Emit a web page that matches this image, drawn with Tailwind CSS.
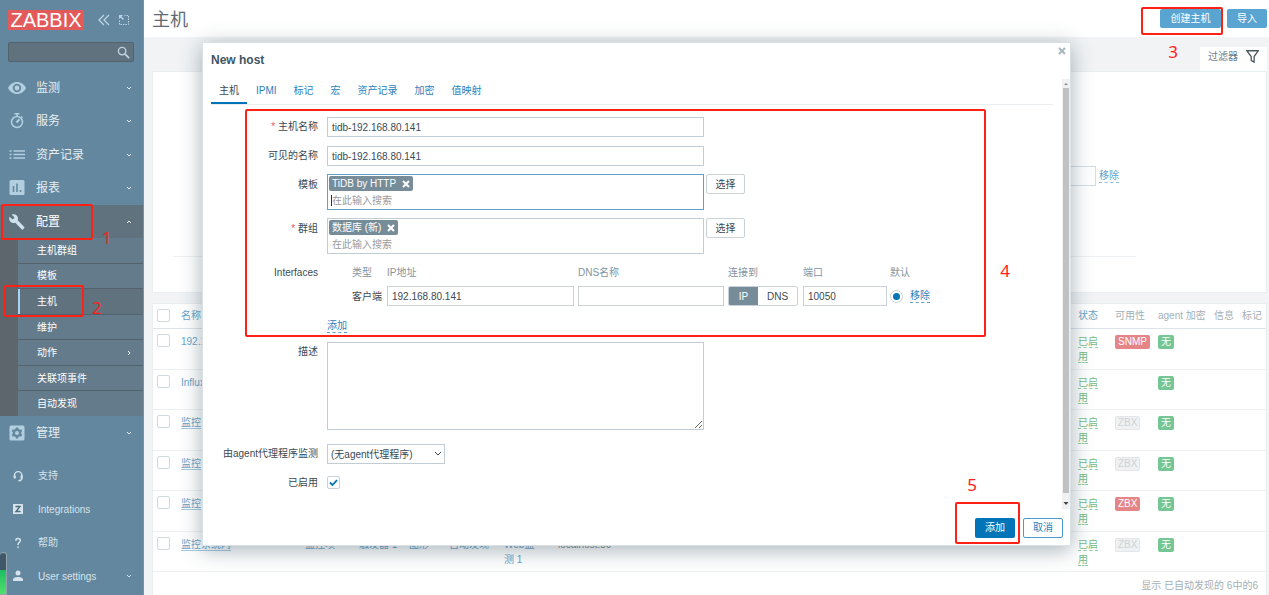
<!DOCTYPE html>
<html lang="zh-CN">
<head>
<meta charset="utf-8">
<meta name="viewport" content="width=device-width, initial-scale=1">
<title>主机</title>
<script src="https://cdn.jsdelivr.net/npm/@tailwindcss/browser@4"></script>
</head>
<body class="relative flex h-screen overflow-hidden bg-[#f1f3f5] font-['Liberation_Sans','Noto_Sans_CJK_SC',sans-serif] text-[10px] leading-[15px] text-[#3c4a54]">

<svg class="hidden">
  <symbol id="down" viewBox="0 0 6 6"><path d="M1 2l2 2 2-2" fill="none" stroke="currentColor"/></symbol>
  <symbol id="x" viewBox="0 0 8 8"><path d="M1 1l6 6M7 1L1 7" fill="none" stroke="currentColor" stroke-width="2"/></symbol>
</svg>

<!-- Sidebar -->
<aside class="relative flex w-36 shrink-0 flex-col overflow-hidden border-r border-[#7295a9] bg-[#62879e] text-[#e6eef3]">
  <div class="flex h-10 shrink-0 items-center pl-2">
    <a href="#" class="flex h-5 w-[76px] items-center justify-center bg-[#e35a5b] text-[20px] leading-5 text-white">ZABBIX</a>
    <button aria-label="折叠" class="ml-[14px] text-[#bcd3e1]"><svg class="h-3 w-3" viewBox="0 0 12 12" fill="none" stroke="currentColor" stroke-width="1.300"><path d="M6 1L1 6l5 5M11 1L6 6l5 5"/></svg></button>
    <button aria-label="隐藏" class="ml-2 text-[#bcd3e1]"><svg class="h-3 w-3" viewBox="0 0 12 12" fill="none" stroke="currentColor"><path d="M1.500 6.500v4h9v-9h-4" stroke-dasharray="1.500 1"/><path d="M5.500 5.500L2 2" stroke-width="1.500"/><path d="M1 1h4L1 5z" fill="currentColor" stroke="none"/></svg></button>
  </div>
  <div class="mt-[2px] ml-2 flex h-5 w-[126px] shrink-0 items-center rounded-xs border border-[#54626d] bg-[#61727f] pr-[3px]">
    <input aria-label="搜索" class="min-w-0 flex-1 bg-transparent px-1 outline-none">
    <svg class="h-[13px] w-[13px] text-[#bcd3e1]" viewBox="0 0 14 14" fill="none" stroke="currentColor" stroke-width="1.500"><circle cx="5.500" cy="5.500" r="4"/><path d="M8.500 8.500L13 13" stroke-width="2"/></svg>
  </div>

  <nav class="mt-[9px] shrink-0">
    <div class="flex h-[134px] flex-col text-xs">
      <a href="#" class="flex flex-1 items-center pr-[11px] pl-2"><svg class="h-[18px] w-[18px] text-[#b3cfdf]" viewBox="0 0 18 18" fill="currentColor"><path fill-rule="evenodd" d="M9 3C5 3 1.700 5.500 0 9c1.700 3.500 5 6 9 6s7.300-2.500 9-6c-1.700-3.500-5-6-9-6zm0 10.200a4.200 4.200 0 110-8.400 4.200 4.200 0 010 8.400z"/><circle cx="9" cy="9" r="2.400"/></svg><span class="ml-[10px] flex-1">监测</span><svg class="h-[6px] w-[6px]"><use href="#down"/></svg></a>
      <a href="#" class="flex flex-1 items-center pr-[11px] pl-2"><svg class="h-[18px] w-[18px] text-[#b3cfdf]" viewBox="0 0 18 18" fill="none" stroke="currentColor" stroke-width="1.500"><circle cx="9" cy="10" r="5.500"/><path d="M6.500 1.700h5M9 1.500v3M13 4.500l1.500 1.200"/><path d="M11.500 7.300L8.500 10.500" stroke-width="2"/></svg><span class="ml-[10px] flex-1">服务</span><svg class="h-[6px] w-[6px]"><use href="#down"/></svg></a>
      <a href="#" class="flex flex-1 items-center pr-[11px] pl-2"><svg class="h-[18px] w-[18px] text-[#b3cfdf]" viewBox="0 0 18 18" fill="none" stroke="currentColor" stroke-width="1.500"><path d="M1.500 5h2M1.500 8.500h2M1.500 12h2M5.500 5H17M5.500 8.500H17M5.500 12H17"/></svg><span class="ml-[10px] flex-1">资产记录</span><svg class="h-[6px] w-[6px]"><use href="#down"/></svg></a>
      <a href="#" class="flex flex-1 items-center pr-[11px] pl-2"><svg class="h-[18px] w-[18px]" viewBox="0 0 18 18"><rect x="1.500" y="1" width="15" height="15" rx="1.500" fill="#b3cfdf"/><path d="M5.500 7v6M9 4.500V13M12.500 11v2" stroke="#62879e" stroke-width="1.600"/></svg><span class="ml-[10px] flex-1">报表</span><svg class="h-[6px] w-[6px]"><use href="#down"/></svg></a>
    </div>
    <a href="#" class="flex h-[33px] items-center bg-[#61727f] pr-[11px] pl-2 text-xs text-white"><svg class="h-[18px] w-[18px] text-[#cfe1ec]" viewBox="0 0 18 18"><path d="M16.300 13.900L9.700 7.300c.6-1.600.3-3.500-1-4.800C7.400 1.200 5.300.9 3.700 1.700l2.900 2.900-2 2L1.600 3.700C.8 5.300 1.100 7.400 2.500 8.800c1.300 1.300 3.200 1.600 4.800 1l6.600 6.600c.3.300.7.300 1 0l1.400-1.500c.3-.2.3-.7 0-1z" fill="currentColor"/></svg><span class="ml-[10px] flex-1">配置</span><svg class="h-[6px] w-[6px] rotate-180"><use href="#down"/></svg></a>
    <div class="flex h-[178px] flex-col divide-y divide-[#53626d] border-l-18 border-[#5d666c] bg-[#637b8a] text-white">
      <a href="#" class="flex flex-1 items-center pl-[19px]">主机群组</a>
      <a href="#" class="flex flex-1 items-center pl-[19px]">模板</a>
      <a href="#" class="flex flex-1 items-center bg-[#61727f]"><span class="h-full w-[2px] bg-[#a8d4f2]"></span><span class="pl-[17px]">主机</span></a>
      <a href="#" class="flex flex-1 items-center pl-[19px]">维护</a>
      <a href="#" class="flex flex-1 items-center pr-[11px] pl-[19px]"><span class="flex-1">动作</span><svg class="h-[6px] w-[6px] -rotate-90"><use href="#down"/></svg></a>
      <a href="#" class="flex flex-1 items-center pl-[19px]">关联项事件</a>
      <a href="#" class="flex flex-1 items-center pl-[19px]">自动发现</a>
    </div>
    <a href="#" class="flex h-[33px] items-center pr-[11px] pl-2 text-xs"><svg class="h-[18px] w-[18px]" viewBox="0 0 18 18"><rect x="1.500" y="1.500" width="15" height="15" rx="1.500" fill="#b3cfdf"/><g stroke="#62879e" fill="none"><circle cx="9" cy="9" r="3.200" stroke-width="2.400"/><path d="M9 3.500v2M9 12.500v2M4.200 6.200l1.800 1M12 10.800l1.800 1M4.200 11.800l1.800-1M12 7.200l1.800-1" stroke-width="2.400"/></g></svg><span class="ml-[10px] flex-1">管理</span><svg class="h-[6px] w-[6px]"><use href="#down"/></svg></a>
  </nav>

  <div class="mt-[10px] flex h-[134px] shrink-0 flex-col text-[#d6e3eb]">
    <a href="#" class="flex flex-1 items-center pl-3"><svg class="h-3 w-3" viewBox="0 0 12 12" fill="none" stroke="currentColor" stroke-width="1.400"><path d="M2.500 8V5.300a3.700 3.700 0 017.400 0V8c0 1.800-1.500 2.700-3.400 2.700"/><path d="M2.700 5.500v3M9.600 5.500v3" stroke-width="2"/></svg><span class="ml-[14px]">支持</span></a>
    <a href="#" class="flex flex-1 items-center pl-3"><svg class="h-3 w-3" viewBox="0 0 12 12"><rect x="1" y="1" width="10" height="10" fill="currentColor"/><path d="M3.500 3.500h4.500l-4 5h4.500" fill="none" stroke="#4c6c80" stroke-width="1.400"/></svg><span class="ml-[14px]">Integrations</span></a>
    <a href="#" class="flex flex-1 items-center pl-3"><svg class="h-3 w-3" viewBox="0 0 12 12" fill="none" stroke="currentColor" stroke-width="1.500"><path d="M3.800 3.800C3.800 2.200 4.800 1.500 6 1.500s2.300.8 2.300 2.100C8.300 5.300 6 5.400 6 8M6 9.500V11"/></svg><span class="ml-[14px]">帮助</span></a>
    <a href="#" class="flex flex-1 items-center pr-[11px] pl-3"><svg class="h-3 w-3" viewBox="0 0 12 12" fill="currentColor"><circle cx="6" cy="3" r="2.500"/><path d="M1 11V9.500C1 7.800 4 7 6 7s5 .8 5 2.500V11z"/></svg><span class="ml-[14px] flex-1">User settings</span><svg class="h-[6px] w-[6px]"><use href="#down"/></svg></a>
  </div>
  <div class="absolute bottom-0 left-0 h-[43px] w-[7px] rounded-t-sm border border-l-0 border-[#93a5b0] bg-[#40586a] pt-[17px]"><div class="h-full bg-linear-to-b from-[#18bd62] to-[#4fe06c]"></div></div>
</aside>

<!-- Page -->
<main class="flex min-w-0 flex-1 flex-col">
  <header class="flex h-[37px] shrink-0 items-center bg-white pr-[2px] pl-2">
    <h1 class="flex-1 pt-[2px] text-[18px] leading-5 text-[#5f6b73]">主机</h1>
    <button class="mr-[6px] h-[19px] w-[61px] rounded-xs bg-[#5aa4d2] text-white">创建主机</button>
    <button class="h-[19px] w-10 rounded-xs bg-[#5aa4d2] text-white">导入</button>
  </header>
  <div class="flex min-h-0 flex-1 flex-col pr-[2px] pl-2">
    <div class="flex shrink-0 justify-end pt-[10px]">
      <button class="flex h-6 items-center gap-2 bg-white px-2 pb-[6px] text-[#6f7c84]">过滤器<svg class="h-[13px] w-[13px]" viewBox="0 0 12 12" fill="none" stroke="#4d5960" stroke-width="1.200"><path d="M.7.700h10.600L7.500 6v5.300L4.800 9.500V6z"/></svg></button>
    </div>
    <section class="h-[222px] shrink-0 border border-[#e9eef0] bg-white">
      <div class="mt-[94px] ml-[772px] flex items-center gap-[3px]">
        <input aria-label="标记值" class="h-5 w-[171px] border border-[#d3dde2]">
        <a href="#" class="border-b border-dashed border-[#8fbcd8] leading-[13px] text-[#63a2cb]">移除</a>
      </div>
      <hr class="mt-[70px] mr-[130px] ml-5 border-[#eef1f3]">
    </section>
    <section class="mt-[10px] min-h-0 flex-1 border border-b-0 border-[#e9eef0] bg-white">
      <table class="w-full table-fixed border-collapse text-left align-top text-[#68a3c9]">
        <colgroup><col class="w-[28px]"><col class="w-[124px]"><col class="w-[54px]"><col class="w-[50px]"><col class="w-[40px]"><col class="w-[55px]"><col class="w-[54px]"><col><col class="w-[37px]"><col class="w-[43px]"><col class="w-[56px]"><col class="w-[28px]"><col class="w-[24px]"></colgroup>
        <thead>
          <tr class="h-6 border-b border-[#dde3e7] [&>th]:font-normal [&>th]:whitespace-nowrap">
            <th class="pl-1"><input type="checkbox" aria-label="全选" class="block h-[13px] w-[13px] appearance-none rounded-xs border border-[#d0d9de] bg-white"></th>
            <th>名称</th><th>监控项</th><th>触发器</th><th>图形</th><th>自动发现</th><th>Web监测</th><th>接口</th><th>状态</th>
            <th class="text-[#a3afb6]">可用性</th><th class="text-[#a3afb6]">agent 加密</th><th class="text-[#a3afb6]">信息</th><th class="text-[#a3afb6]">标记</th>
          </tr>
        </thead>
        <tbody class="[&_td]:pt-[5px] [&_td]:align-top [&>tr]:h-[41px] [&>tr]:border-b [&>tr]:border-[#eef1f3] [&>tr:nth-child(2n)]:h-10">
          <tr><td class="pl-1"><input type="checkbox" aria-label="选择" class="block h-[13px] w-[13px] appearance-none rounded-xs border border-[#d0d9de] bg-white"></td><td><a href="#">192.168.80.1</a></td><td></td><td></td><td></td><td></td><td></td><td></td><td class="pr-2"><a href="#" class="border-b border-dashed border-[#92cda1] text-[#74bc84]">已启用</a></td><td><span class="inline-block rounded-xs bg-[#e58587] px-[3px] leading-[14px] text-white">SNMP</span></td><td><span class="inline-block rounded-xs bg-[#74c695] px-[3px] leading-[14px] text-white">无</span></td><td></td><td></td></tr>
          <tr><td class="pl-1"><input type="checkbox" aria-label="选择" class="block h-[13px] w-[13px] appearance-none rounded-xs border border-[#d0d9de] bg-white"></td><td><a href="#">Influxdb</a></td><td></td><td></td><td></td><td></td><td></td><td></td><td class="pr-2"><a href="#" class="border-b border-dashed border-[#92cda1] text-[#74bc84]">已启用</a></td><td></td><td><span class="inline-block rounded-xs bg-[#74c695] px-[3px] leading-[14px] text-white">无</span></td><td></td><td></td></tr>
          <tr><td class="pl-1"><input type="checkbox" aria-label="选择" class="block h-[13px] w-[13px] appearance-none rounded-xs border border-[#d0d9de] bg-white"></td><td><a href="#" class="border-b border-[#a5c9df]">监控</a></td><td></td><td></td><td></td><td></td><td></td><td></td><td class="pr-2"><a href="#" class="border-b border-dashed border-[#92cda1] text-[#74bc84]">已启用</a></td><td><span class="inline-block rounded-xs border border-[#e2e6e8] bg-[#eff1f2] px-[2px] leading-3 text-[#ccd3d7]">ZBX</span></td><td><span class="inline-block rounded-xs bg-[#74c695] px-[3px] leading-[14px] text-white">无</span></td><td></td><td></td></tr>
          <tr><td class="pl-1"><input type="checkbox" aria-label="选择" class="block h-[13px] w-[13px] appearance-none rounded-xs border border-[#d0d9de] bg-white"></td><td><a href="#" class="border-b border-[#a5c9df]">监控</a></td><td></td><td></td><td></td><td></td><td></td><td></td><td class="pr-2"><a href="#" class="border-b border-dashed border-[#92cda1] text-[#74bc84]">已启用</a></td><td><span class="inline-block rounded-xs border border-[#e2e6e8] bg-[#eff1f2] px-[2px] leading-3 text-[#ccd3d7]">ZBX</span></td><td><span class="inline-block rounded-xs bg-[#74c695] px-[3px] leading-[14px] text-white">无</span></td><td></td><td></td></tr>
          <tr><td class="pl-1"><input type="checkbox" aria-label="选择" class="block h-[13px] w-[13px] appearance-none rounded-xs border border-[#d0d9de] bg-white"></td><td><a href="#" class="border-b border-[#a5c9df]">监控</a></td><td></td><td></td><td></td><td></td><td></td><td></td><td class="pr-2"><a href="#" class="border-b border-dashed border-[#92cda1] text-[#74bc84]">已启用</a></td><td><span class="inline-block rounded-xs bg-[#e58587] px-[3px] leading-[14px] text-white">ZBX</span></td><td><span class="inline-block rounded-xs bg-[#74c695] px-[3px] leading-[14px] text-white">无</span></td><td></td><td></td></tr>
          <tr><td class="pl-1"><input type="checkbox" aria-label="选择" class="block h-[13px] w-[13px] appearance-none rounded-xs border border-[#d0d9de] bg-white"></td><td><a href="#" class="border-b border-[#a5c9df]">监控系统内</a></td><td>监控项</td><td>触发器 1</td><td>图形</td><td>自动发现</td><td class="pr-5">Web监测 1</td><td class="text-[#7d888f]">localhost:80</td><td class="pr-2"><a href="#" class="border-b border-dashed border-[#92cda1] text-[#74bc84]">已启用</a></td><td><span class="inline-block rounded-xs border border-[#e2e6e8] bg-[#eff1f2] px-[2px] leading-3 text-[#ccd3d7]">ZBX</span></td><td><span class="inline-block rounded-xs bg-[#74c695] px-[3px] leading-[14px] text-white">无</span></td><td></td><td></td></tr>
        </tbody>
      </table>
      <p class="pt-[6px] pr-2 text-right text-[#a3afb6]">显示 已自动发现的 6中的6</p>
    </section>
  </div>
</main>

<!-- New host dialog -->
<div role="dialog" aria-label="New host" class="absolute top-[42px] right-[198px] left-[202px] flex h-[504px] flex-col border border-[#dbe2e6] bg-white shadow-[0_4px_20px_rgba(60,85,100,0.450)]">
  <div class="flex h-9 shrink-0 items-start pr-1 pl-2">
    <h2 class="flex-1 pt-[9px] text-xs font-bold text-[#3f5663]">New host</h2>
    <button aria-label="关闭" class="pt-1 text-[#a9b7bf]"><svg class="h-2 w-2"><use href="#x"/></svg></button>
  </div>
  <div class="flex min-h-0 flex-1">
    <form class="min-w-0 flex-1 pr-[9px] pl-2">
      <div class="flex h-[26px] gap-px border-b border-[#ebeef0] text-[#2a83bd] [&>a]:px-2 [&>a]:pt-1">
        <a href="#" class="border-b-2 border-[#0275b8] text-[#3c4a54]">主机</a><a href="#">IPMI</a><a href="#">标记</a><a href="#">宏</a><a href="#">资产记录</a><a href="#">加密</a><a href="#">值映射</a>
      </div>
      <div class="mt-3 grid grid-cols-[107px_1fr] items-start gap-x-[9px] gap-y-[9px] [&>.lb]:text-right [&>.lb]:leading-5">
        <label for="host" class="lb"><span class="text-[#e45959]">*</span> 主机名称</label>
        <input id="host" value="tidb-192.168.80.141" class="h-5 w-[377px] border border-[#c0cdd4] px-1">
        <label for="vis" class="lb">可见的名称</label>
        <input id="vis" value="tidb-192.168.80.141" class="h-5 w-[377px] border border-[#c0cdd4] px-1">
        <label for="tpl" class="lb">模板</label>
        <div class="-mt-px flex items-start gap-[2px]">
          <div class="h-9 w-[377px] border border-[#64a0c4] p-px">
            <span class="flex h-[15px] w-fit items-center gap-[6px] rounded-xs bg-[#768d99] px-[3px] text-white">TiDB by HTTP<button type="button" aria-label="移除"><svg class="h-2 w-2"><use href="#x"/></svg></button></span>
            <div class="flex h-[18px] items-center pl-[2px]"><span class="h-[11px] w-px bg-[#333]"></span><input id="tpl" placeholder="在此输入搜索" class="min-w-0 flex-1 outline-none placeholder:text-[#9a9a9a]"></div>
          </div>
          <button type="button" class="h-5 w-[39px] rounded-xs border border-[#c8d2d8]">选择</button>
        </div>
        <label for="grp" class="lb"><span class="text-[#e45959]">*</span> 群组</label>
        <div class="-mt-px flex items-start gap-[2px]">
          <div class="h-9 w-[377px] border border-[#c0cdd4] p-px">
            <span class="flex h-[15px] w-fit items-center gap-[6px] rounded-xs bg-[#768d99] px-[3px] text-white">数据库 (新)<button type="button" aria-label="移除"><svg class="h-2 w-2"><use href="#x"/></svg></button></span>
            <div class="flex h-[18px] items-center pl-[3px]"><input id="grp" placeholder="在此输入搜索" class="min-w-0 flex-1 outline-none placeholder:text-[#9a9a9a]"></div>
          </div>
          <button type="button" class="h-5 w-[39px] rounded-xs border border-[#c8d2d8]">选择</button>
        </div>
        <span class="lb">Interfaces</span>
        <div>
          <table class="w-[620px] table-fixed text-left">
            <colgroup><col class="w-[60px]"><col class="w-[191px]"><col class="w-[150px]"><col class="w-[75px]"><col class="w-[87px]"><col></colgroup>
            <thead class="text-[#8494a0]"><tr class="h-[19px] [&>th]:font-normal"><th class="pl-[25px]">类型</th><th>IP地址</th><th>DNS名称</th><th>连接到</th><th>端口</th><th>默认</th></tr></thead>
            <tbody><tr class="h-7"><td class="pl-[25px]">客户端</td>
              <td><input aria-label="IP地址" value="192.168.80.141" class="block h-5 w-[187px] border border-[#c8d2d8] px-1"></td>
              <td><input aria-label="DNS名称" class="block h-5 w-[146px] border border-[#c8d2d8] px-1"></td>
              <td><div class="flex h-5 w-[70px] overflow-hidden rounded-xs border border-[#c8d2d8]"><button type="button" class="w-[29px] bg-[#768d99] text-white">IP</button><button type="button" class="flex-1">DNS</button></div></td>
              <td><input aria-label="端口" value="10050" class="block h-5 w-[84px] border border-[#c8d2d8] px-1"></td>
              <td><div class="flex items-center gap-[7px]"><input type="radio" checked aria-label="默认" class="h-[13px] w-[13px] appearance-none rounded-full border border-[#c8d2d8] bg-[#0275b8] bg-clip-content p-[2px]"><a href="#" class="border-b border-dashed border-[#5d9fca] leading-[13px] text-[#2a83bd]">移除</a></div></td></tr></tbody>
          </table>
          <a href="#" class="mt-[9px] inline-block border-b border-dashed border-[#5d9fca] leading-[13px] text-[#2a83bd]">添加</a>
        </div>
        <label for="desc" class="lb">描述</label>
        <textarea id="desc" class="block h-[88px] w-[377px] border border-[#c0cdd4] px-1"></textarea>
        <label for="proxy" class="lb mt-[5px]">由agent代理程序监测</label>
        <div class="relative mt-[5px] w-[118px]">
          <select id="proxy" class="block h-5 w-full appearance-none border border-[#c0cdd4] bg-white px-[3px]"><option>(无agent代理程序)</option></select>
          <svg class="pointer-events-none absolute top-[6px] right-[3px] h-2 w-2" viewBox="0 0 8 8"><path d="M1 2l3 3 3-3" fill="none" stroke="#3c4a54"/></svg>
        </div>
        <label for="on" class="lb">已启用</label>
        <span class="relative mt-[3px] block h-[13px] w-[13px]">
          <input id="on" type="checkbox" checked class="block h-[13px] w-[13px] appearance-none rounded-xs border border-[#c8d2d8]">
          <svg class="pointer-events-none absolute inset-0" viewBox="0 0 13 13"><path d="M3 6.500L5.500 9 10 4.200" fill="none" stroke="#0275b8" stroke-width="1.800"/></svg>
        </span>
      </div>
    </form>
    <div class="flex w-2 flex-col items-center bg-[#f1f1f1]">
      <svg class="h-[9px] w-2" viewBox="0 0 8 9"><path d="M2 6l2-2 2 2z" fill="#8b8b8b"/></svg>
      <div class="w-[6px] flex-1 bg-[#c1c1c1]"></div>
      <svg class="h-4 w-2" viewBox="0 0 8 16"><path d="M1.500 9h5L4 12z" fill="#444"/></svg>
    </div>
  </div>
  <div class="flex h-9 shrink-0 items-center justify-end gap-2 pt-px pr-[7px]">
    <button class="h-5 w-10 rounded-xs bg-[#0275b8] text-white">添加</button>
    <button class="h-5 w-10 rounded-xs border border-[#4a9acb] text-[#2a83bd]">取消</button>
  </div>
</div>

<!-- Step annotations -->
<div class="pointer-events-none absolute inset-0 font-['Noto_Sans',sans-serif] text-[17px] leading-5 text-[#ff2116] [&>.bx]:absolute [&>.bx]:rounded-xs [&>.bx]:border-2 [&>.bx]:border-[#ff2116] [&>b]:absolute [&>b]:font-normal">
  <div class="bx top-[204px] left-[1px] h-9 w-[92px]"></div><b class="top-[228px] left-[102px]">1</b>
  <div class="bx top-[285px] left-[4px] h-8 w-20"></div><b class="top-[298px] left-[92px]">2</b>
  <div class="bx top-[7px] right-[46px] h-7 w-[82px]"></div><b class="top-[42px] right-[91px]">3</b>
  <div class="bx top-[109px] right-[283px] left-[245px] h-[228px]"></div><b class="top-[261px] right-[259px]">4</b>
  <div class="bx top-[502px] right-[249px] h-[42px] w-[65px]"></div><b class="top-[475px] right-[292px]">5</b>
</div>
</body>
</html>
